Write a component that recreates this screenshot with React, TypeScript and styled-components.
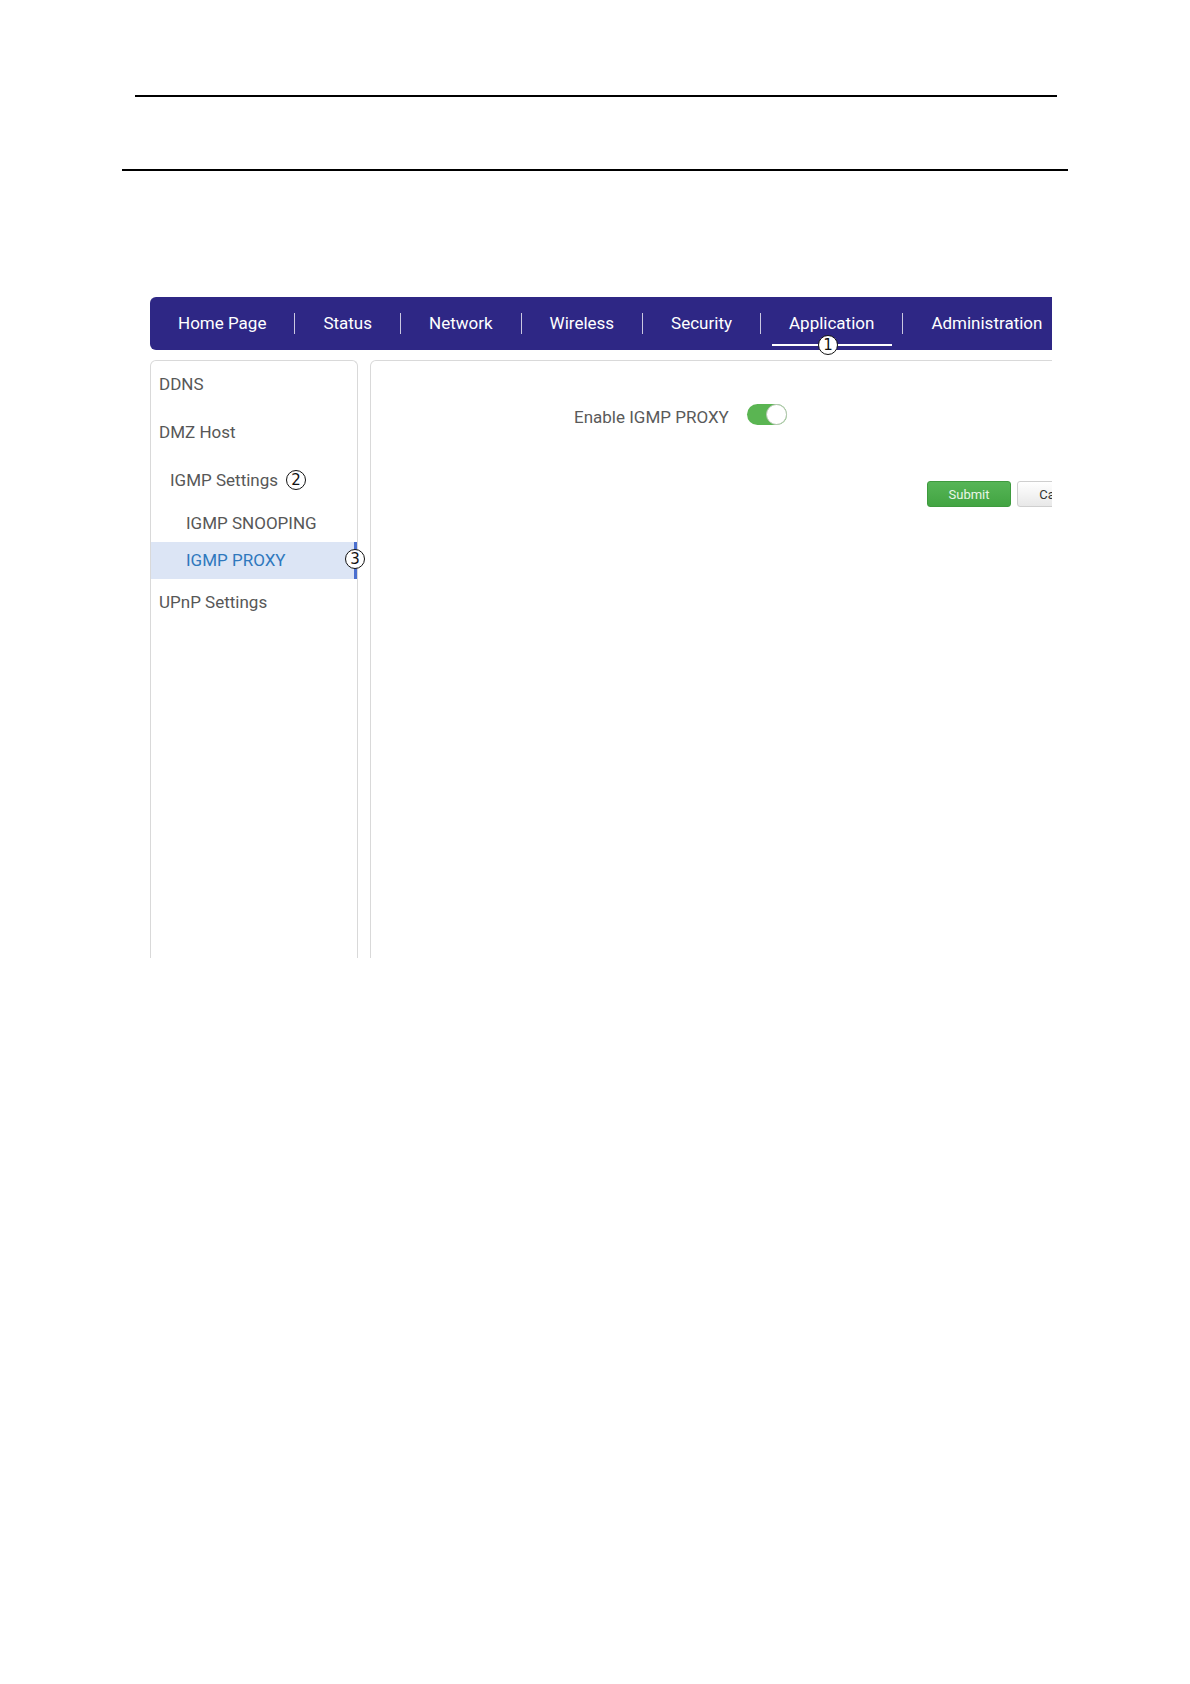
import React from "react";
import styled, { createGlobalStyle } from "styled-components";

const GlobalStyle = createGlobalStyle`
  html, body {
    margin: 0;
    padding: 0;
    background: #ffffff;
  }
  body {
    font-family: Roboto, "Liberation Sans", Arial, sans-serif;
  }
`;

const Page = styled.div`
  width: 1190px;
  height: 1684px;
  padding-top: 95px;
  box-sizing: border-box;
`;

const Rule = styled.div<{ $left: number; $width: number; $thick: number; $gap: number }>`
  margin-left: ${(p) => p.$left}px;
  margin-top: ${(p) => p.$gap}px;
  width: ${(p) => p.$width}px;
  height: ${(p) => p.$thick}px;
  background: #000;
`;

const Frame = styled.div`
  margin: 126px 0 0 150px;
  width: 902px;
  overflow: hidden;
`;

const NavBar = styled.nav`
  display: flex;
  align-items: center;
  width: 1000px;
  height: 53px;
  background: #2e2785;
  border-radius: 6px;
`;

const NavItem = styled.div<{ $active?: boolean }>`
  position: relative;
  padding: 0 28px 2px;
  height: 53px;
  box-sizing: border-box;
  display: flex;
  align-items: center;
  color: #ffffff;
  font-size: 17px;
  white-space: nowrap;
  ${(p) =>
    p.$active &&
    `
    &::after {
      content: "";
      position: absolute;
      left: 11px;
      right: 10px;
      bottom: 4px;
      height: 2px;
      background: #ffffff;
    }
  `}
`;

const NavSep = styled.span`
  width: 1px;
  height: 21px;
  background: rgba(255, 255, 255, 0.75);
`;

const Marker = styled.span`
  display: inline-flex;
  align-items: center;
  justify-content: center;
  width: 20px;
  height: 20px;
  box-sizing: border-box;
  border: 1px solid #111;
  border-radius: 50%;
  background: #ffffff;
  color: #111;
  font-family: "DejaVu Sans", sans-serif;
  font-size: 15px;
  line-height: 1;
`;

const NavMarker = styled(Marker)`
  position: absolute;
  left: 57px;
  bottom: -5px;
  z-index: 2;
`;

const Body = styled.div`
  display: flex;
  gap: 12px;
  margin-top: 10px;
  height: 598px;
`;

const Sidebar = styled.div`
  position: relative;
  width: 208px;
  flex: none;
  border: 1px solid #d9d9d9;
  border-bottom: none;
  border-radius: 6px 6px 0 0;
  box-sizing: border-box;
`;

const MenuItem = styled.div<{ $level: number; $active?: boolean }>`
  position: relative;
  display: flex;
  align-items: center;
  gap: 8px;
  height: ${(p) => (p.$level === 2 ? 37 : 48)}px;
  padding-left: ${(p) => (p.$level === 0 ? 8 : p.$level === 1 ? 19 : 35)}px;
  padding-bottom: 2px;
  box-sizing: border-box;
  font-size: 17px;
  color: ${(p) => (p.$active ? "#2f78bd" : "#575757")};
  background: ${(p) => (p.$active ? "#dce5f5" : "transparent")};
  ${(p) =>
    p.$active &&
    `
    &::after {
      content: "";
      position: absolute;
      right: 0;
      top: 0;
      bottom: 0;
      width: 3px;
      background: #4a6fcf;
    }
  `}
`;

const SideMarker = styled(Marker)`
  position: absolute;
  right: -8px;
  top: 7px;
  z-index: 2;
`;

const Content = styled.div`
  width: 800px;
  flex: none;
  border: 1px solid #d9d9d9;
  border-bottom: none;
  border-radius: 6px 6px 0 0;
  box-sizing: border-box;
`;

const FieldRow = styled.div`
  display: flex;
  align-items: center;
  gap: 18px;
  padding: 46px 0 0 203px;
`;

const FieldLabel = styled.span`
  font-size: 17px;
  color: #5a5a5a;
`;

const Toggle = styled.div<{ $on: boolean }>`
  position: relative;
  width: 40px;
  height: 21px;
  border-radius: 11px;
  background: ${(p) => (p.$on ? "#5ab552" : "#cccccc")};
  margin-top: -5px;

  &::after {
    content: "";
    position: absolute;
    top: 0;
    left: ${(p) => (p.$on ? "19px" : "0")};
    width: 21px;
    height: 21px;
    box-sizing: border-box;
    border-radius: 50%;
    background: #ffffff;
    border: 1px solid #b9c7b5;
  }
`;

const ButtonRow = styled.div`
  display: flex;
  gap: 6px;
  padding: 54px 0 0 556px;
`;

const Button = styled.button<{ $primary?: boolean }>`
  height: 26px;
  width: 84px;
  padding: 0;
  border-radius: 3px;
  font-family: Roboto, "Liberation Sans", Arial, sans-serif;
  font-size: 13px;
  border: 1px solid ${(p) => (p.$primary ? "#3e9a3e" : "#cfcfcf")};
  color: ${(p) => (p.$primary ? "#e9f6e6" : "#333333")};
  background: ${(p) =>
    p.$primary
      ? "linear-gradient(#56b556, #42a442)"
      : "linear-gradient(#ffffff, #e8e8e8)"};
`;

const navItems = [
  "Home Page",
  "Status",
  "Network",
  "Wireless",
  "Security",
  "Application",
  "Administration",
];

const App: React.FC = () => {
  return (
    <Page>
      <GlobalStyle />
      <Rule $left={135} $width={922} $thick={2} $gap={0} />
      <Rule $left={122} $width={946} $thick={2} $gap={72} />
      <Frame>
        <NavBar>
          {navItems.map((item, i) => (
            <React.Fragment key={item}>
              {i > 0 && <NavSep />}
              <NavItem $active={item === "Application"}>
                {item}
                {item === "Application" && <NavMarker>1</NavMarker>}
              </NavItem>
            </React.Fragment>
          ))}
        </NavBar>
        <Body>
          <Sidebar>
            <MenuItem $level={0}>DDNS</MenuItem>
            <MenuItem $level={0}>DMZ Host</MenuItem>
            <MenuItem $level={1}>
              IGMP Settings <Marker>2</Marker>
            </MenuItem>
            <MenuItem $level={2}>IGMP SNOOPING</MenuItem>
            <MenuItem $level={2} $active>
              IGMP PROXY
              <SideMarker>3</SideMarker>
            </MenuItem>
            <MenuItem $level={0}>UPnP Settings</MenuItem>
          </Sidebar>
          <Content>
            <FieldRow>
              <FieldLabel>Enable IGMP PROXY</FieldLabel>
              <Toggle $on />
            </FieldRow>
            <ButtonRow>
              <Button $primary>Submit</Button>
              <Button>Cancel</Button>
            </ButtonRow>
          </Content>
        </Body>
      </Frame>
    </Page>
  );
};

export default App;
